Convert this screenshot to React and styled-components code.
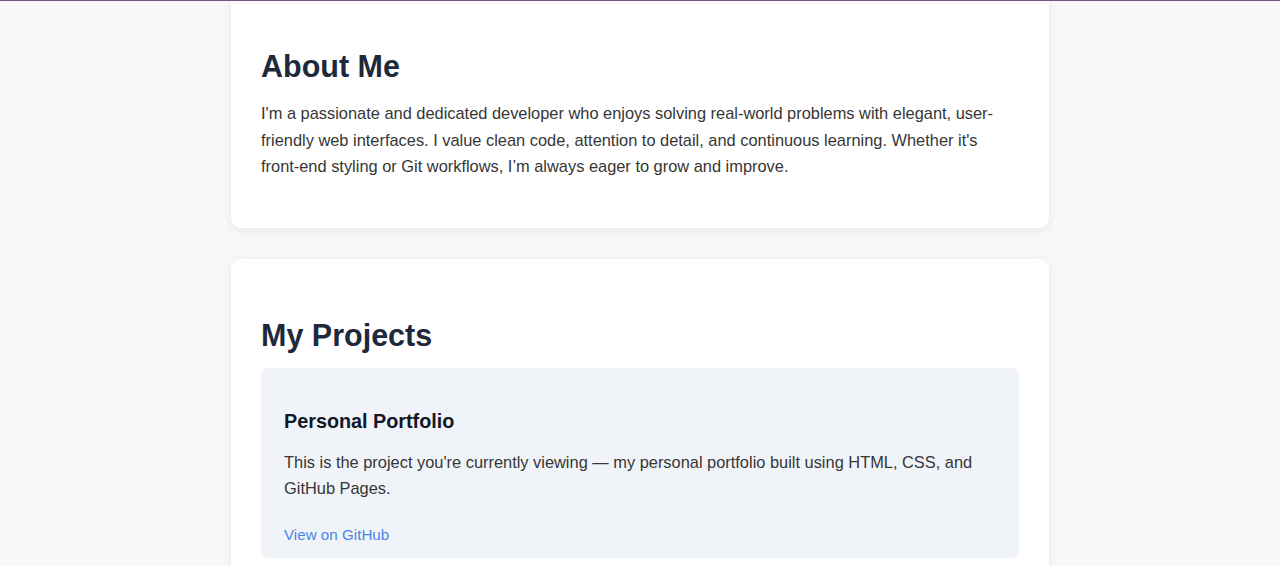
import React from 'react';
import styled, { createGlobalStyle } from 'styled-components';

const GlobalStyle = createGlobalStyle`
  html, body {
    margin: 0;
    padding: 0;
    background-color: #f8f8f9;
    font-family: "Liberation Sans", Arial, sans-serif;
    color: #333333;
  }
`;

const App = () => {
  return (
    <>
      <GlobalStyle />
      <TopRule />
      <Main>
        <Card $cutTop>
          <SectionTitle>About Me</SectionTitle>
          <Text>
            I'm a passionate and dedicated developer who enjoys solving real-world problems with elegant, user-friendly
            web interfaces. I value clean code, attention to detail, and continuous learning. Whether it's front-end
            styling or Git workflows, I’m always eager to grow and improve.
          </Text>
        </Card>

        <Card>
          <SectionTitle>My Projects</SectionTitle>
          <Project>
            <ProjectTitle>Personal Portfolio</ProjectTitle>
            <Text>
              This is the project you're currently viewing — my personal portfolio built using HTML, CSS, and GitHub
              Pages.
            </Text>
            <ProjectLink href="#">View on GitHub</ProjectLink>
          </Project>
        </Card>
      </Main>
    </>
  );
};

export default App;

const TopRule = styled.div`
  height: 1px;
  width: 100%;
  background-color: #74587a;
`;

const Main = styled.main`
  display: flex;
  flex-direction: column;
  gap: 31px;
  width: 818px;
  margin: 0 auto;
`;

const Card = styled.section`
  background-color: #ffffff;
  border-radius: ${(props) => (props.$cutTop ? '0 0 10px 10px' : '10px')};
  box-shadow: 0 2px 8px rgba(0, 0, 0, 0.08);
  padding: ${(props) => (props.$cutTop ? '19px 30px 32px' : '30px 30px 32px')};
`;

const SectionTitle = styled.h2`
  margin: 29px 0 15px;
  font-size: 30.5px;
  font-weight: 700;
  line-height: normal;
  color: #1e293b;
`;

const Text = styled.p`
  margin: 16px 0;
  font-size: 16.4px;
  line-height: 26.5px;
  color: #363636;
`;

const Project = styled.article`
  background-color: #f0f4f9;
  border-radius: 8px;
  padding: 22px 23px 11px;
`;

const ProjectTitle = styled.h3`
  margin: 20px 0 16px;
  font-size: 19.8px;
  font-weight: 700;
  line-height: normal;
  color: #111827;
`;

const ProjectLink = styled.a`
  display: block;
  margin-top: 20px;
  font-size: 15.2px;
  line-height: 25px;
  color: #4a84e6;
  text-decoration: none;
`;
